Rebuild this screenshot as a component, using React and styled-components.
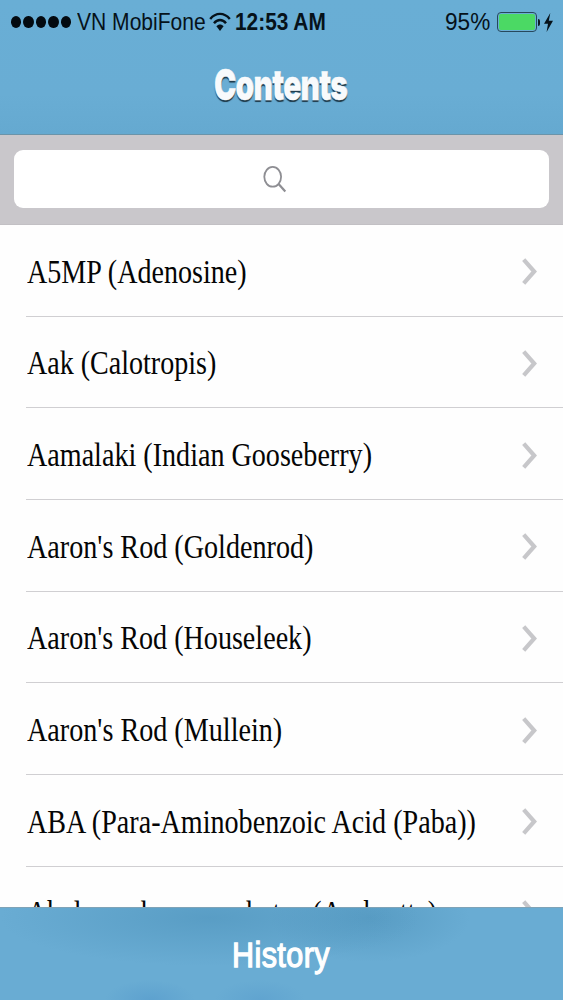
import React, { useLayoutEffect, useRef, useState } from "react";
import styled, { createGlobalStyle } from "styled-components";

const Global = createGlobalStyle`
  *, *::before, *::after { box-sizing: border-box; }
  html, body { margin: 0; padding: 0; overflow: hidden; background: #fff; }
`;

const Screen = styled.div`
  width: 563px;
  height: 1000px;
  display: flex;
  flex-direction: column;
  overflow: hidden;
  background: #fefefe;
  font-family: "Liberation Sans", Arial, sans-serif;
`;

const Header = styled.header`
  flex: none;
  height: 135px;
  display: flex;
  flex-direction: column;
  background: linear-gradient(#69aed5, #69add4 70%, #65a9d0);
  border-bottom: 1.5px solid #6b94a9;
`;

const StatusBar = styled.div`
  height: 44px;
  padding: 0 10px 0 11px;
  display: flex;
  align-items: center;
  color: #06121a;
`;

const Signal = styled.div`
  display: flex;
  gap: 2px;
  margin-right: 6.5px;
`;

const Dot = styled.span`
  width: 10.4px;
  height: 12px;
  border-radius: 50%;
  background: #030a10;
`;

const FitBox = styled.span`
  display: block;
  flex: none;
  width: ${(p) => p.$width}px;
  white-space: nowrap;
`;

const FitText = styled.span`
  display: inline-block;
  transform-origin: 0 50%;
`;

const StatusText = styled(FitBox)`
  font-size: 23.6px;
  line-height: 44px;
  font-weight: ${(p) => (p.$bold ? 700 : 400)};
`;

const WifiIcon = styled.svg`
  flex: none;
  margin: 0 4px 0 3.5px;
`;

const Spacer = styled.div`
  flex: 1;
`;

const Battery = styled.div`
  width: 40px;
  height: 20px;
  margin-left: 7px;
  padding: 1px;
  border: 1px solid #27485c;
  border-radius: 4px;
`;

const Charge = styled.div`
  width: 36px;
  height: 16px;
  border-radius: 2px;
  background: #4bd964;
`;

const BatteryCap = styled.div`
  width: 2px;
  height: 7px;
  margin: 0 4px 0 1px;
  border-radius: 0 2px 2px 0;
  background: #0b1a24;
`;

const TitleRow = styled.h1`
  margin: 0;
  height: 84px;
  display: flex;
  justify-content: center;
  padding-right: 2px;
  font-size: 42px;
  line-height: 82px;
  font-weight: 900;
  letter-spacing: -1px;
  font-family: Inter, "Liberation Sans", sans-serif;
  color: #f8fafc;
  -webkit-text-stroke: 0.4px #f8fafc;
  text-shadow: 0 2px 1px #1d3848;
`;

const SearchPanel = styled.div`
  flex: none;
  height: 90px;
  padding: 15px 14px 17px;
  background: #c9c7cb;
  border-bottom: 1px solid #c2c0c4;
`;

const SearchField = styled.div`
  height: 58px;
  display: flex;
  align-items: center;
  justify-content: center;
  padding-right: 13px;
  border-radius: 9px;
  background: #fff;
`;

const List = styled.main`
  flex: 1;
  min-height: 0;
  overflow: hidden;
`;

const Row = styled.div`
  height: 91.67px;
  margin-left: 26px;
  padding: 3px 26px 0 0.5px;
  display: flex;
  align-items: center;
  justify-content: space-between;
  border-bottom: 1.5px solid #d0cfd2;
`;

const RowLabel = styled(FitBox)`
  font-family: "Liberation Serif", "Times New Roman", serif;
  font-size: 33px;
  line-height: 44px;
  color: #050505;
`;

const Footer = styled.footer`
  flex: none;
  height: 93px;
  display: flex;
  justify-content: center;
  padding-right: 1px;
  border-top: 1px solid #7fa3b7;
  background:
    radial-gradient(ellipse 210px 48px at 210px 10px, rgba(76, 145, 185, 0.55), rgba(76, 145, 185, 0) 100%),
    radial-gradient(ellipse 100px 44px at 370px 10px, rgba(76, 145, 185, 0.55), rgba(76, 145, 185, 0) 100%),
    radial-gradient(ellipse 45px 20px at 150px 92px, rgba(76, 145, 200, 0.4), rgba(76, 145, 200, 0) 100%),
    radial-gradient(ellipse 45px 20px at 260px 92px, rgba(76, 145, 200, 0.3), rgba(76, 145, 200, 0) 100%),
    #69acd3;
`;

const FooterLabel = styled(FitBox)`
  font-size: 35.5px;
  line-height: 95px;
  color: #fff;
  letter-spacing: 0.5px;
  -webkit-text-stroke: 1.3px #fff;
`;

function Fit({ as: Box = FitBox, width, children, ...rest }) {
  const ref = useRef(null);
  const [scale, setScale] = useState(1);
  useLayoutEffect(() => {
    const fit = () => setScale(width / ref.current.offsetWidth);
    fit();
    document.fonts.ready.then(fit);
  }, [width]);
  return (
    <Box $width={width} {...rest}>
      <FitText ref={ref} style={{ transform: `scaleX(${scale})` }}>
        {children}
      </FitText>
    </Box>
  );
}

const Chevron = () => (
  <svg width="15" height="27" viewBox="0 0 15 27" fill="none" stroke="#c7c7ca" strokeWidth="4.2">
    <path d="M1.7 1.7 12.2 13.5 1.7 25.3" />
  </svg>
);

const items = [
  { label: "A5MP (Adenosine)", width: 219.5 },
  { label: "Aak (Calotropis)", width: 189.5 },
  { label: "Aamalaki (Indian Gooseberry)", width: 345 },
  { label: "Aaron's Rod (Goldenrod)", width: 286.5 },
  { label: "Aaron's Rod (Houseleek)", width: 284.5 },
  { label: "Aaron's Rod (Mullein)", width: 255 },
  { label: "ABA (Para-Aminobenzoic Acid (Paba))", width: 449 },
  { label: "Abelmoschus moschatus (Ambrette)", width: 410 },
];

export default function App() {
  return (
    <Screen>
      <Global />
      <Header>
        <StatusBar>
          <Signal>
            {[0, 1, 2, 3, 4].map((n) => (
              <Dot key={n} />
            ))}
          </Signal>
          <Fit as={StatusText} width={128.5}>VN MobiFone</Fit>
          <WifiIcon width="22" height="20" viewBox="0 0 22 20" fill="none" stroke="#06121a" strokeWidth="2.4">
            <path d="M1.2 7C6.8 .2 15.2 .2 20.8 7" />
            <path d="M5 11.2C8.4 7 13.6 7 17 11.2" />
            <path d="M7.4 14.2C9.5 12 12.5 12 14.6 14.2L11 19Z" fill="#06121a" stroke="none" />
          </WifiIcon>
          <Fit as={StatusText} width={91} $bold>12:53 AM</Fit>
          <Spacer />
          <Fit as={StatusText} width={45}>95%</Fit>
          <Battery>
            <Charge />
          </Battery>
          <BatteryCap />
          <svg width="9" height="19" viewBox="0 0 9 19" fill="#06121a">
            <path d="M6.3 0 0 10.8h4L2.6 19 9 7.8H4.8Z" />
          </svg>
        </StatusBar>
        <TitleRow>
          <Fit width={133}>Contents</Fit>
        </TitleRow>
      </Header>
      <SearchPanel>
        <SearchField>
          <svg width="24" height="28" viewBox="0 0 24 28" fill="none" stroke="#8e8e93" strokeWidth="1.8">
            <ellipse cx="9.7" cy="11.8" rx="8.4" ry="9.9" />
            <path d="M15.6 19 22.3 26.6" strokeWidth="2.2" />
          </svg>
        </SearchField>
      </SearchPanel>
      <List>
        {items.map((item) => (
          <Row key={item.label}>
            <Fit as={RowLabel} width={item.width}>{item.label}</Fit>
            <Chevron />
          </Row>
        ))}
      </List>
      <Footer>
        <Fit as={FooterLabel} width={98}>History</Fit>
      </Footer>
    </Screen>
  );
}
